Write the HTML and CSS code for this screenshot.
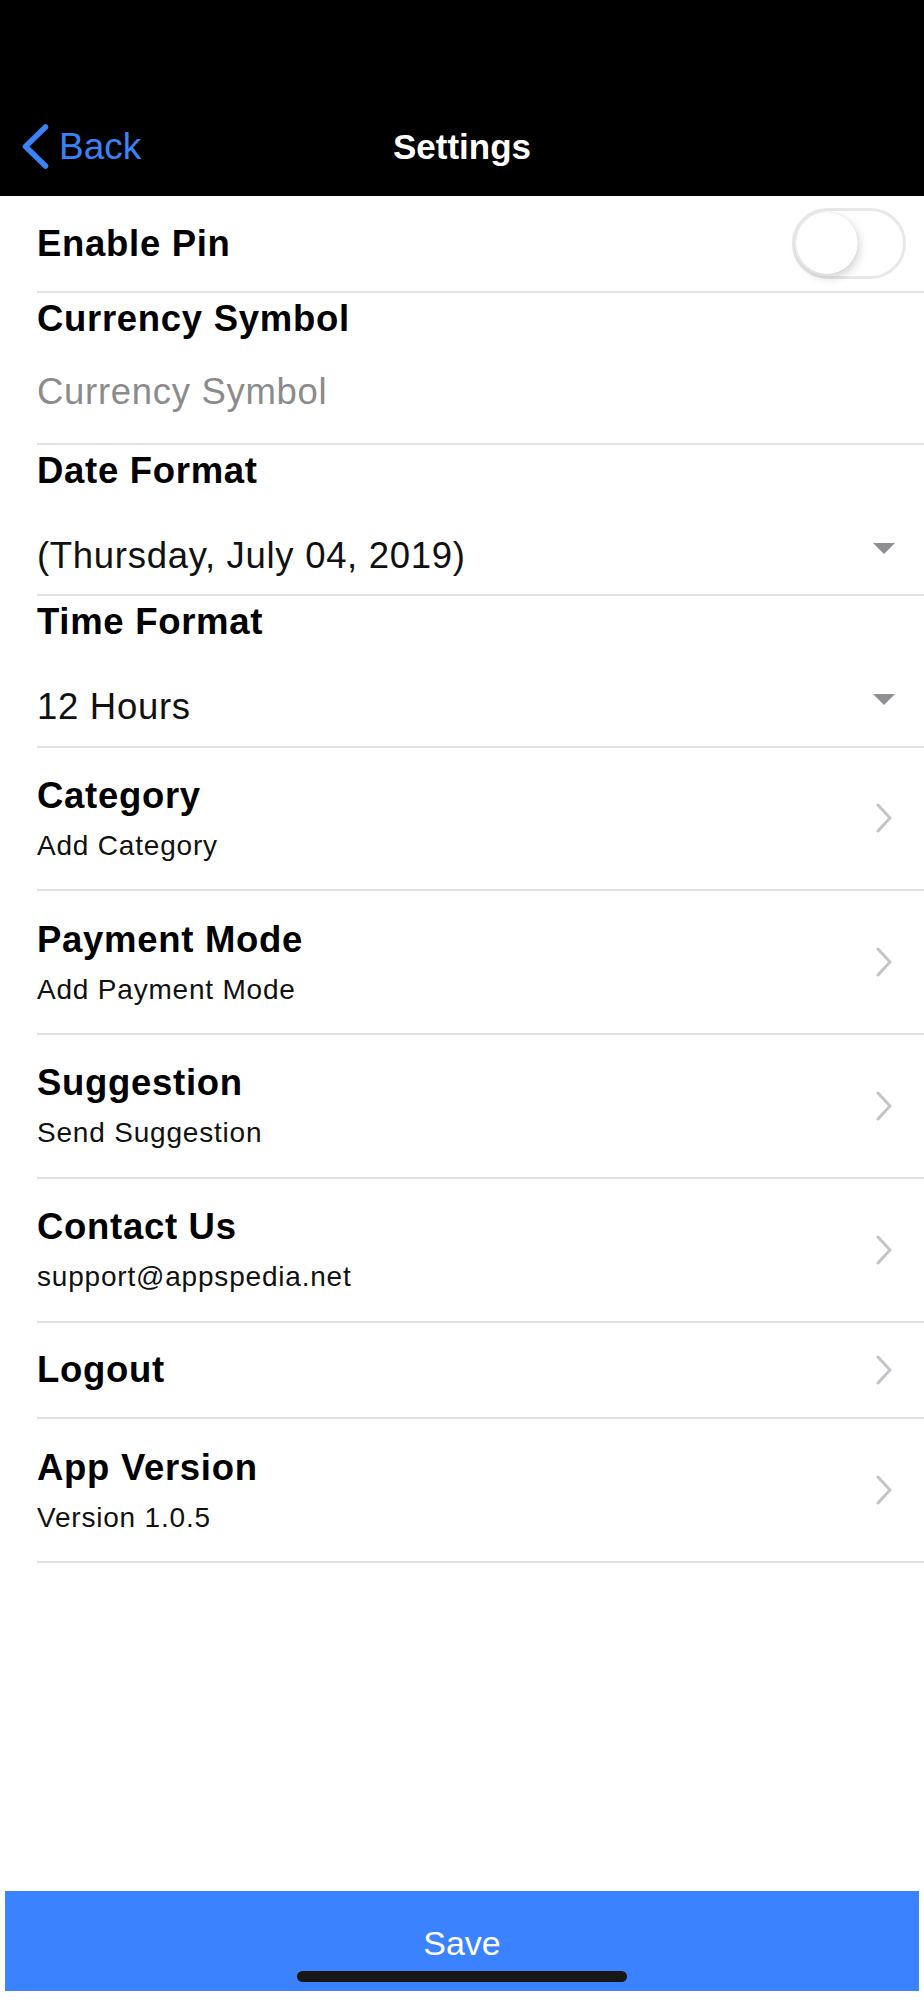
FILE: index.html
```html
<!DOCTYPE html>
<html lang="en">
<head>
    <meta charset="UTF-8">
    <meta name="viewport" content="width=device-width, initial-scale=1.0">
    <title>Settings</title>
    <link rel="stylesheet" href="styles.css">
</head>
<body>

    <header class="navbar">
        <div class="navbar-inner">
            <a class="back" href="#">
                <svg viewBox="0 0 27 45"><polyline points="23.5,3 3.5,22.5 23.5,42" /></svg>
                <span>Back</span>
            </a>
            <div class="title">Settings</div>
            <div></div>
        </div>
    </header>

    <main class="settings">
        <div class="row row-single">
            <div class="label">Enable Pin</div>
            <label class="switch">
                <input type="checkbox">
                <span class="knob"></span>
            </label>
        </div>

        <div class="row row-field">
            <div class="label">Currency Symbol</div>
            <input class="field" type="text" placeholder="Currency Symbol">
        </div>

        <div class="row row-field row-select">
            <div class="label">Date Format</div>
            <div class="select">
                <span>(Thursday, July 04, 2019)</span>
                <svg viewBox="0 0 22 11"><polygon points="0,0 22,0 11,11" /></svg>
            </div>
        </div>

        <div class="row row-field row-select">
            <div class="label">Time Format</div>
            <div class="select">
                <span>12 Hours</span>
                <svg viewBox="0 0 22 11"><polygon points="0,0 22,0 11,11" /></svg>
            </div>
        </div>

        <a class="row row-link" href="#">
            <div class="text">
                <div class="label">Category</div>
                <div class="sub">Add Category</div>
            </div>
            <svg class="chevron" viewBox="0 0 18 30"><polyline points="3,2 15,15 3,28" /></svg>
        </a>

        <a class="row row-link" href="#">
            <div class="text">
                <div class="label">Payment Mode</div>
                <div class="sub">Add Payment Mode</div>
            </div>
            <svg class="chevron" viewBox="0 0 18 30"><polyline points="3,2 15,15 3,28" /></svg>
        </a>

        <a class="row row-link" href="#">
            <div class="text">
                <div class="label">Suggestion</div>
                <div class="sub">Send Suggestion</div>
            </div>
            <svg class="chevron" viewBox="0 0 18 30"><polyline points="3,2 15,15 3,28" /></svg>
        </a>

        <a class="row row-link" href="#">
            <div class="text">
                <div class="label">Contact Us</div>
                <div class="sub">support@appspedia.net</div>
            </div>
            <svg class="chevron" viewBox="0 0 18 30"><polyline points="3,2 15,15 3,28" /></svg>
        </a>

        <a class="row row-single" href="#">
            <div class="label">Logout</div>
            <svg class="chevron" viewBox="0 0 18 30"><polyline points="3,2 15,15 3,28" /></svg>
        </a>

        <a class="row row-link" href="#">
            <div class="text">
                <div class="label">App Version</div>
                <div class="sub">Version 1.0.5</div>
            </div>
            <svg class="chevron" viewBox="0 0 18 30"><polyline points="3,2 15,15 3,28" /></svg>
        </a>
    </main>

    <footer class="footer">
        <button class="save" type="button">
            Save
            <span class="home-indicator"></span>
        </button>
    </footer>

</body>
</html>
```

FILE: styles.css
```css
html, body {
    margin: 0;
    padding: 0;
}
body {
    font-family: "Liberation Sans", Arial, sans-serif;
    background-color: #ffffff;
    color: #000000;
    min-height: 100vh;
    display: flex;
    flex-direction: column;
}
.navbar {
    background-color: #000000;
    height: 196px;
    box-sizing: border-box;
    padding-top: 124px;
}
.navbar-inner {
    height: 45px;
    display: grid;
    grid-template-columns: 1fr auto 1fr;
    align-items: center;
}
.back {
    display: flex;
    align-items: center;
    gap: 10px;
    padding-left: 22px;
    color: #3982f7;
    font-size: 37px;
    text-decoration: none;
}
.back svg {
    width: 27px;
    height: 45px;
    display: block;
}
.back polyline {
    fill: none;
    stroke: #3982f7;
    stroke-width: 5.5;
    stroke-linecap: round;
    stroke-linejoin: round;
}
.title {
    color: #ffffff;
    font-size: 35px;
    font-weight: bold;
}
.settings {
    flex: 1;
}
.row {
    margin-left: 37px;
    padding-right: 18px;
    border-bottom: 2px solid #e2e2e2;
    box-sizing: border-box;
    display: flex;
    align-items: center;
    justify-content: space-between;
    color: #000000;
    text-decoration: none;
}
.label {
    font-size: 36.5px;
    font-weight: bold;
    letter-spacing: 0.7px;
    line-height: 45px;
}
.row-single {
    height: 96.5px;
}
.row-field {
    height: 152px;
    flex-direction: column;
    align-items: stretch;
    justify-content: flex-start;
    padding-top: 5px;
}
.row-field .label {
    line-height: 42px;
}
.row-select {
    height: 151.5px;
}
.field {
    margin-top: 30px;
    height: 44px;
    padding: 0;
    border: none;
    outline: none;
    font-family: inherit;
    font-size: 36.5px;
    letter-spacing: 0.7px;
    color: #111111;
    background: transparent;
}
.field::placeholder {
    color: #8b8b8b;
}
.select {
    margin-top: 42px;
    display: flex;
    justify-content: space-between;
    align-items: flex-start;
    font-size: 36.5px;
    line-height: 44px;
    letter-spacing: 0.7px;
    color: #111111;
}
.select svg {
    width: 22px;
    height: 11px;
    margin-top: 9px;
    margin-right: 11px;
    fill: #8e8e93;
}
.row-link {
    height: 143.8px;
}
.text {
    display: flex;
    flex-direction: column;
}
.sub {
    font-size: 28px;
    line-height: 36px;
    letter-spacing: 0.8px;
    margin-top: 10px;
    color: #111111;
}
.chevron {
    width: 18px;
    height: 30px;
    margin-right: 13px;
}
.chevron polyline {
    fill: none;
    stroke: #c4c4c8;
    stroke-width: 3;
    stroke-linecap: round;
    stroke-linejoin: round;
}
.switch {
    width: 114px;
    height: 71px;
    box-sizing: border-box;
    border: 3px solid #e8e8e8;
    border-radius: 36px;
    padding: 0 1px;
    display: flex;
    align-items: center;
    background-color: #ffffff;
    cursor: pointer;
}
.switch input {
    display: none;
}
.knob {
    width: 62px;
    height: 62px;
    border-radius: 50%;
    background-color: #ffffff;
    box-shadow: 2px 4px 8px rgba(0, 0, 0, 0.16), 0 0 1px rgba(0, 0, 0, 0.2);
}
.footer {
    padding: 0 5px 9px;
}
.save {
    position: relative;
    width: 100%;
    height: 100px;
    padding: 4px 0 0;
    border: none;
    background-color: #3a82ff;
    color: #ffffff;
    font-family: inherit;
    font-size: 34px;
    cursor: pointer;
}
.home-indicator {
    position: absolute;
    left: 50%;
    bottom: 9px;
    width: 330px;
    height: 11px;
    margin-left: -165px;
    border-radius: 6px;
    background-color: #171717;
}
```
